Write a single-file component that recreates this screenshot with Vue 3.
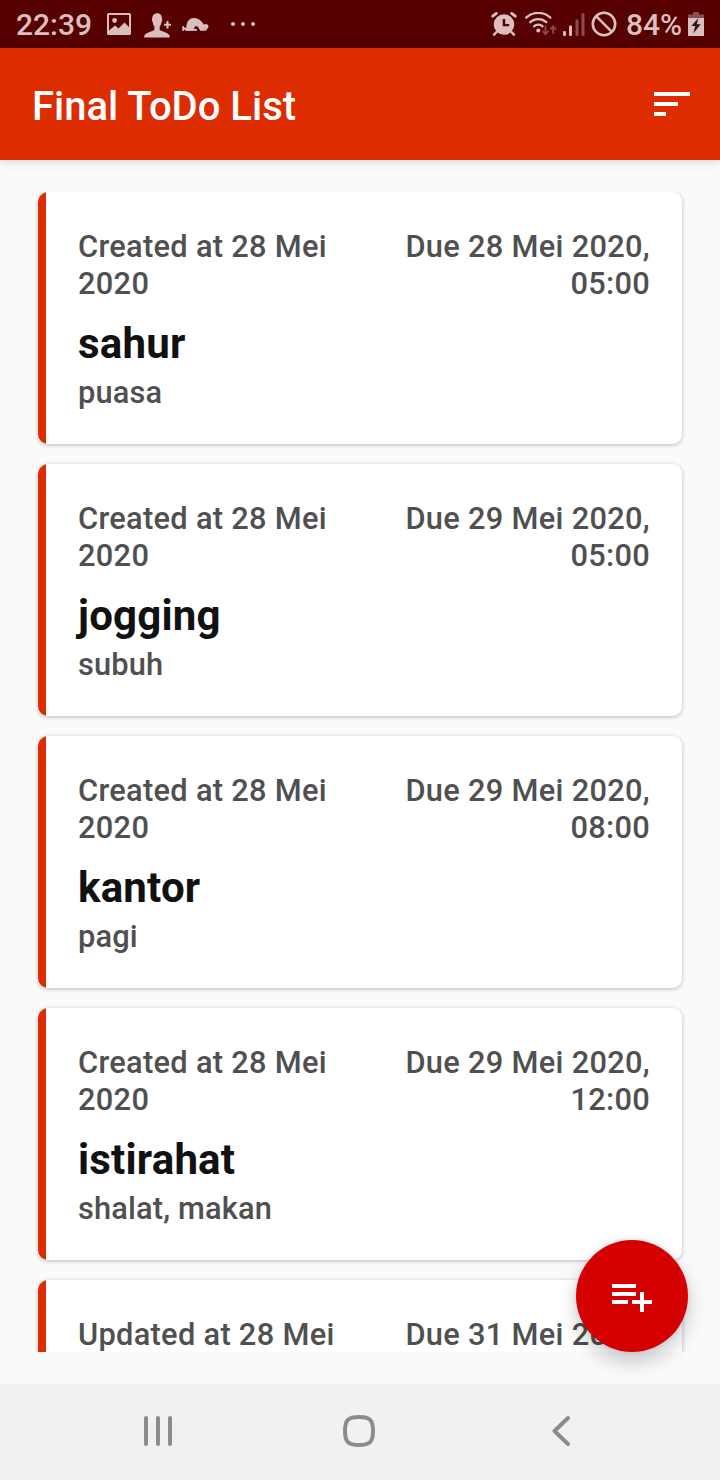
<script setup>
const tasks = [
  { stamp: 'Created at 28 Mei 2020', due: 'Due 28 Mei 2020, 05:00', title: 'sahur', note: 'puasa' },
  { stamp: 'Created at 28 Mei 2020', due: 'Due 29 Mei 2020, 05:00', title: 'jogging', note: 'subuh' },
  { stamp: 'Created at 28 Mei 2020', due: 'Due 29 Mei 2020, 08:00', title: 'kantor', note: 'pagi' },
  { stamp: 'Created at 28 Mei 2020', due: 'Due 29 Mei 2020, 12:00', title: 'istirahat', note: 'shalat, makan' },
  { stamp: 'Updated at 28 Mei 2020', due: 'Due 31 Mei 2020, 05:00', title: '', note: '' },
]
</script>

<template>
  <div class="screen">
    <header class="status">
      <div class="status-group">
        <span class="clock">22:39</span>
        <svg class="glyph picture" width="24" height="22" viewBox="0 0 24 22">
          <path fill-rule="evenodd" d="M1.500 0h21A1.500 1.500 0 0 1 24 1.500v19a1.500 1.500 0 0 1-1.500 1.500h-21A1.500 1.500 0 0 1 0 20.500v-19A1.500 1.500 0 0 1 1.500 0zM2 2v15.500l6-5 3.500 3L17.500 9.500l4.500 4.500V2z" />
          <circle cx="7.600" cy="7.500" r="2.400" />
        </svg>
        <svg class="glyph person" width="28" height="25" viewBox="0 0 28 25">
          <path d="M13.300.2c3.200 0 4.800 2.300 4.700 5.600.6.600.2 3-.6 3.400-.3 2-.9 3.400-1.700 4.300v3.200c1.300 2 9.500 2.500 9.900 6.300l.2 1.500H0l.3-1.500c.6-3.800 8.800-4.300 10.100-6.300v-3.200c-.8-.9-1.300-2.300-1.600-4.300-.8-.4-1.200-2.800-.6-3.400-.1-3.300 1.700-5.600 5.100-5.600z" />
          <path d="M22.500 8h2v2.700H27v2h-2.500v2.700h-2v-2.700H20v-2h2.500z" />
        </svg>
        <svg class="glyph prayer" width="27" height="15" viewBox="0 0 27 15">
          <path d="M4.500 8.500C4.800 4.500 8 1 11.500 1c3.500-.4 7.200 1.700 10.200 6.200l.6 1.500-.5 3 2.700-.2.500 1.300-1.500 1h-5.200l-2.500-4.300-2.300-.6-2 2.700 3.500.7v1.400L4.500 13.900l-2.200-1.500-.5 1.600-1.500-.2V9.500l1.500-.4.700 1.400 1.600.4z" />
          <circle cx="23.900" cy="9.500" r="2.500" />
        </svg>
        <svg class="glyph dots" width="25" height="6" viewBox="0 0 25 6">
          <circle cx="2" cy="3" r="2" /><circle cx="12" cy="3" r="2" /><circle cx="22" cy="3" r="2" />
        </svg>
      </div>
      <div class="status-group">
        <svg class="glyph" width="26" height="24" viewBox="0 0 26 24">
          <path fill-rule="evenodd" d="M13 2.200a10.300 10.300 0 1 1 0 20.600 10.300 10.300 0 0 1 0-20.600zM11.700 7v7.300h6.500V12h-4V7z" />
          <path class="stroke" d="M1.700 4.200 5.400 1.300M24.300 4.200 20.600 1.300" stroke-width="2.800" />
          <path class="stroke" d="M5.500 20.200l-2.400 2.500M20.500 20.200l2.400 2.500" stroke-width="2.400" />
        </svg>
        <svg class="glyph wifi" width="33" height="25" viewBox="0 0 33 25">
          <g class="stroke" stroke-width="2.300">
            <path d="M1.200 5.600a18 18 0 0 1 24.200 0" />
            <path d="M5.200 10.200a12 12 0 0 1 16.200 0" />
            <path d="M9 14.300a6.800 6.800 0 0 1 8.600 0" />
          </g>
          <circle cx="13.300" cy="18.400" r="2" />
          <path class="stroke faint" d="M20.500 14.500v7.500m-2.500-2.500 2.500 2.700 2.500-2.700M28.200 21v-6.500m-2.500 2.500 2.500-2.700 2.500 2.700" stroke-width="1.800" />
        </svg>
        <svg class="glyph signal" width="22" height="24" viewBox="0 0 22 24">
          <rect x="0" y="18" width="3" height="5" rx="1.200" />
          <rect x="6" y="12.500" width="3" height="10.500" rx="1.200" />
          <rect class="faint" x="12.500" y="6.500" width="3" height="16.500" rx="1.200" />
          <rect class="faint" x="18.500" y="0" width="3" height="23" rx="1.200" />
        </svg>
        <svg class="glyph ban" width="26" height="26" viewBox="0 0 26 26">
          <path class="stroke" d="M13 1.800a11.200 11.200 0 1 0 0 22.400 11.200 11.200 0 0 0 0-22.400zM5.200 5.200l15.600 15.600" stroke-width="2.600" />
        </svg>
        <span class="percent">84%</span>
        <svg class="glyph battery" width="16" height="24" viewBox="0 0 16 24">
          <path class="faint" d="M5 0h6v2.500h5V6H0V2.500h5z" />
          <path d="M0 6h16v18H0z" />
          <path class="bolt" d="M10.400 6 3.400 14h3.800L5.400 21.200l7.300-9H8.800z" />
        </svg>
      </div>
    </header>

    <div class="toolbar">
      <h1>Final ToDo List</h1>
      <svg width="36" height="24" viewBox="0 0 36 24" fill="#fff">
        <path d="M0 0h36v4H0zM0 10h24v4H0zM0 20h12v4H0z" />
      </svg>
    </div>

    <main class="content">
      <div class="list">
        <article v-for="task in tasks" :key="task.due" class="card">
          <div class="card-inner">
            <div class="meta">
              <p class="stamp">{{ task.stamp }}</p>
              <p class="due">{{ task.due }}</p>
            </div>
            <h2>{{ task.title }}</h2>
            <p class="note">{{ task.note }}</p>
          </div>
        </article>
      </div>
      <button class="fab" aria-label="Add task">
        <svg width="40" height="28" viewBox="0 0 40 28" fill="#fff">
          <path d="M0 0h24v4H0zM0 8h24v4H0zM0 16h16v4H0zM28 8h4v8h8v4h-8v8h-4v-8h-8v-4h8z" />
        </svg>
      </button>
    </main>

    <nav class="navbar">
      <svg width="430" height="34" viewBox="0 0 430 34" fill="none" stroke="#8c8c8c" stroke-width="4" stroke-linecap="round">
        <path d="M3 4v26M15 4v26M27 4v26" />
        <path d="M216 3c11 0 14 3 14 14s-3 14-14 14-14-3-14-14 3-14 14-14z" />
        <path d="M425 4 411.500 17 425 30" stroke-linejoin="round" />
      </svg>
    </nav>
  </div>
</template>

<style>
body { margin: 0; background: #fafafa; }
</style>

<style scoped>
.screen {
  width: 720px;
  height: 1480px;
  display: flex;
  flex-direction: column;
  overflow: hidden;
  background: #fafafa;
  font-family: Roboto, "Noto Sans", sans-serif;
}
h1, h2, p { margin: 0; }
.status {
  height: 48px;
  flex: none;
  box-sizing: border-box;
  padding: 0 16px;
  display: flex;
  justify-content: space-between;
  background: #560000;
  color: #dbbfbf;
  font-size: 30px;
  font-weight: 500;
}
.status-group { display: flex; align-items: center; }
.status svg { flex: none; }
.glyph { fill: #dbbfbf; }
.stroke { fill: none; stroke: #dbbfbf; stroke-linecap: round; }
.faint { opacity: .4; }
.bolt { fill: #2a1515; }
.clock { width: 91px; }
.person { margin: 3px 0 0 13px; }
.prayer { margin-left: 10px; }
.dots { margin-left: 22px; }
.wifi { margin-left: 8px; }
.signal { margin: 2px 0 0 5px; }
.ban { margin-left: 6px; }
.percent { width: 57px; margin-left: 9px; }
.battery { margin-left: 5px; }
.toolbar {
  position: relative;
  z-index: 1;
  height: 112px;
  flex: none;
  box-sizing: border-box;
  padding: 4px 30px 0 32px;
  display: flex;
  align-items: center;
  justify-content: space-between;
  background: #dd2c00;
  color: #fff;
  box-shadow: 0 1px 10px rgba(0, 0, 0, .17);
}
.toolbar svg { margin-top: -4px; }
h1 { font-size: 40px; font-weight: 500; }
.content {
  position: relative;
  height: 1224px;
  flex: none;
  box-sizing: border-box;
  padding-top: 32px;
}
.list {
  height: 1160px;
  box-sizing: border-box;
  padding: 0 38px;
  display: flex;
  flex-direction: column;
  gap: 20px;
  overflow: hidden;
}
.card {
  flex: none;
  height: 252px;
  border-radius: 10px;
  box-shadow: 0 1px 4px rgba(0, 0, 0, .26);
}
.card-inner {
  height: 100%;
  box-sizing: border-box;
  padding: 36px 32px 0 40px;
  border-radius: 10px;
  background: linear-gradient(90deg, #dd2c00 8px, #fff 8px);
  color: #505050;
  font-size: 30.800px;
  line-height: 37px;
  font-weight: 500;
}
.meta { display: flex; justify-content: space-between; letter-spacing: .29px; }
.meta p { width: 270px; }
.meta .due { text-align: right; }
.note { letter-spacing: .15px; }
h2 {
  margin: 16px 0 4px;
  color: #111;
  font-size: 42px;
  line-height: 52px;
  height: 52px;
  font-weight: 700;
  letter-spacing: .2px;
}
.fab {
  position: absolute;
  right: 32px;
  bottom: 32px;
  width: 112px;
  height: 112px;
  padding: 0;
  border: 0;
  border-radius: 50%;
  display: grid;
  place-items: center;
  background: #d50000;
  box-shadow: 0 10px 20px rgba(0, 0, 0, .2), 0 0 5px rgba(0, 0, 0, .1);
}
.fab svg { margin-top: 4px; }
.navbar {
  height: 96px;
  flex: none;
  box-sizing: border-box;
  padding: 30px 0 0 143px;
  background: #f1f1f1;
}
.navbar svg { display: block; }
</style>
